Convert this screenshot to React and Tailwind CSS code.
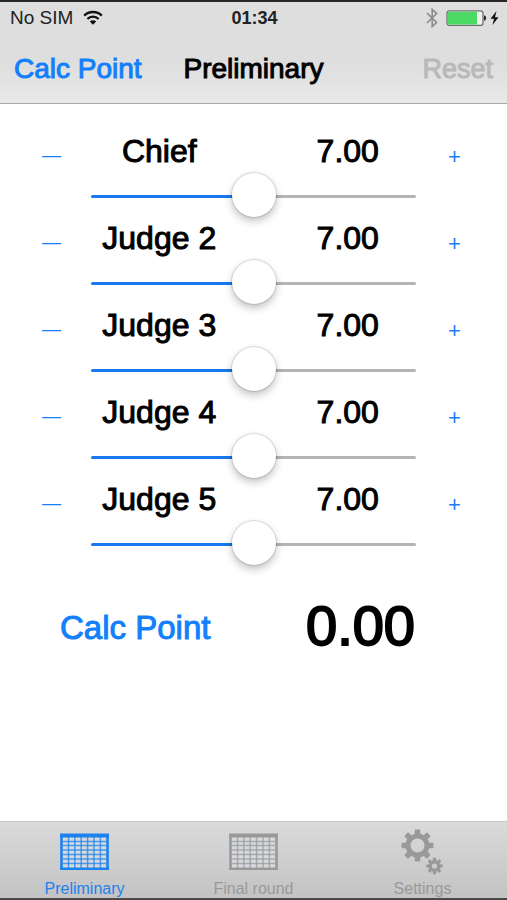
import { useState } from "react";

const MIN = 4;
const MAX = 10;
const MEDIUM = "[-webkit-text-stroke:1px_currentColor]";

function WifiIcon() {
  return (
    <svg width="20" height="16" viewBox="0 0 20 16" fill="none" stroke="#111" aria-hidden="true">
      <path d="M1.2 5.6C6 .8 14 .8 18.8 5.6" strokeWidth="2.4" />
      <path d="M4.4 9C7.4 5.9 12.6 5.9 15.6 9" strokeWidth="2.3" />
      <path d="M10 14.8 6.8 11.4C8.6 9.8 11.4 9.8 13.2 11.4Z" fill="#111" stroke="none" />
    </svg>
  );
}

function BluetoothIcon() {
  return (
    <svg width="12" height="20" viewBox="0 0 12 20" fill="none" stroke="#8c8c8c" strokeWidth="1.6" aria-hidden="true">
      <path d="M1 5 10.6 14.4 6.2 18.6V1.4L10.6 5.6 1 15" />
    </svg>
  );
}

function BatteryIcon() {
  return (
    <svg width="53" height="18" viewBox="0 0 53 18" aria-hidden="true">
      <rect x="1" y="1.8" width="36" height="14.6" rx="2.5" fill="#f0f0f0" stroke="#6f6f6f" strokeWidth="1.3" />
      <path d="M3.5 2.8H31V15.4H3.5Q2 15.4 2 13.9V4.3Q2 2.8 3.5 2.8Z" fill="#4cd964" />
      <path d="M38 6.2Q40.2 7 40.2 9T38 12Z" fill="#222" />
      <path d="M50.5 2 44.5 9.8H48L46.5 16 52.5 8.2H49Z" fill="#111" />
    </svg>
  );
}

function TableIcon() {
  return (
    <svg width="49" height="38" viewBox="0 0 49 38" fill="none" stroke="currentColor" aria-hidden="true">
      <rect x="3" y="4" width="43" height="31" fill="#d6dade" stroke="none" />
      <path d="M8.5 4V35M14.8 4V35M21.2 4V35M27.6 4V35M34 4V35M40.4 4V35" strokeWidth="1.5" opacity=".75" />
      <path d="M3 8.5H46M3 12.5H46M3 17H46M3 21.5H46M3 26H46M3 30.5H46" strokeWidth="1.6" opacity=".75" />
      <path d="M1.5 1V37M47.5 1V37M0 35.8H49" strokeWidth="2.6" />
      <path d="M0 2.5H49" strokeWidth="4" />
    </svg>
  );
}

function Gear({ cx, cy, outer, body, hole, tooth }) {
  const ring = (r) => `M${cx - r} ${cy}a${r} ${r} 0 1 0 ${2 * r} 0a${r} ${r} 0 1 0 ${-2 * r} 0Z`;
  return (
    <g fill="currentColor">
      <path fillRule="evenodd" d={ring(body) + ring(hole)} />
      {[0, 45, 90, 135, 180, 225, 270, 315].map((angle) => (
        <rect
          key={angle}
          x={cx - tooth / 2}
          y={cy - outer}
          width={tooth}
          height={outer - hole - 1}
          rx={tooth / 6}
          transform={`rotate(${angle} ${cx} ${cy})`}
        />
      ))}
    </g>
  );
}

function SettingsIcon() {
  return (
    <svg width="44" height="46" viewBox="0 0 44 46" aria-hidden="true">
      <Gear cx={16.5} cy={16.5} outer={16} body={12} hole={7} tooth={5.6} />
      <Gear cx={33.5} cy={37} outer={8.2} body={6} hole={2.6} tooth={3.2} />
    </svg>
  );
}

function JudgeRow({ name, value, onChange }) {
  const id = name.toLowerCase().replace(" ", "-");
  const fill = ((value - MIN) / (MAX - MIN)) * 100;
  const step = (delta) => onChange(Math.min(MAX, Math.max(MIN, value + delta)));
  const stepClass = "flex items-center justify-center leading-6 text-[#1a7dfa]";
  return (
    <div className="grid grid-cols-[91px_1fr_91px]">
      <button
        type="button"
        aria-label={`Lower ${name}`}
        onClick={() => step(-0.1)}
        className={`${stepClass} h-12 pl-3 text-[19px]`}
      >
        —
      </button>
      <div>
        <div className={`grid grid-cols-2 gap-[52px] text-center text-[32px] leading-10 whitespace-nowrap ${MEDIUM}`}>
          <label htmlFor={id}>{name}</label>
          <output htmlFor={id}>{value.toFixed(2)}</output>
        </div>
        <input
          id={id}
          type="range"
          min={MIN}
          max={MAX}
          step="0.1"
          value={value}
          onChange={(e) => onChange(Number(e.target.value))}
          style={{ "--fill": `${fill}%` }}
          className="mt-1 block h-[43px] w-full appearance-none bg-transparent [&::-webkit-slider-runnable-track]:h-[3px] [&::-webkit-slider-runnable-track]:rounded-full [&::-webkit-slider-runnable-track]:bg-[linear-gradient(to_right,#1878ec_var(--fill),#b4b4b4_var(--fill))] [&::-webkit-slider-thumb]:-mt-[22px] [&::-webkit-slider-thumb]:size-11 [&::-webkit-slider-thumb]:appearance-none [&::-webkit-slider-thumb]:rounded-full [&::-webkit-slider-thumb]:bg-white [&::-webkit-slider-thumb]:shadow-[0_0_1px_1px_rgba(0,0,0,0.12),0_4px_8px_rgba(0,0,0,0.25)]"
        />
      </div>
      <button
        type="button"
        aria-label={`Raise ${name}`}
        onClick={() => step(0.1)}
        className={`${stepClass} h-[52px] pr-[14px] text-[22px]`}
      >
        +
      </button>
    </div>
  );
}

function Tab({ label, active, onClick, children }) {
  return (
    <button
      type="button"
      aria-current={active ? "page" : undefined}
      onClick={onClick}
      className={`flex flex-1 flex-col items-center ${active ? "text-[#1c82ee]" : "text-[#999]"}`}
    >
      <span className="flex h-[46px] items-center">{children}</span>
      <span className="mt-[5px] text-base leading-[18px]">{label}</span>
    </button>
  );
}

export default function App() {
  const [scores, setScores] = useState([
    { name: "Chief", value: 7 },
    { name: "Judge 2", value: 7 },
    { name: "Judge 3", value: 7 },
    { name: "Judge 4", value: 7 },
    { name: "Judge 5", value: 7 },
  ]);
  const [total, setTotal] = useState(0);
  const [tab, setTab] = useState("Preliminary");

  const setScore = (index, value) => setScores(scores.map((s, i) => (i === index ? { ...s, value } : s)));
  const calculate = () => setTotal(scores.reduce((sum, s) => sum + s.value, 0) / scores.length);
  const reset = () => setScores(scores.map((s) => ({ ...s, value: 7 })));

  return (
    <div className="flex min-h-screen flex-col border-t-2 border-b-2 border-t-[#2b2627] border-b-[#4c484a] bg-white font-['Liberation_Sans',Arial,sans-serif] text-black">
      <header className="border-b border-[#a9a9a9] bg-linear-to-b from-[#dedede] from-60% to-[#e9e9e9]">
        <div className="grid h-8 grid-cols-3 items-center pr-2 pl-[10px] text-[19px] leading-6 text-[#222]">
          <div className="flex items-center gap-[10px]">
            <span>No SIM</span>
            <WifiIcon />
          </div>
          <time className="text-center text-[18px] font-bold">01:34</time>
          <div className="flex items-center justify-end gap-2">
            <BluetoothIcon />
            <BatteryIcon />
          </div>
        </div>
        <div className="grid h-[69px] grid-cols-[1fr_auto_1fr] items-center px-[14px] text-[28px] leading-9 whitespace-nowrap">
          <button type="button" onClick={calculate} className={`justify-self-start text-[#137ffb] ${MEDIUM}`}>
            Calc Point
          </button>
          <h1 className={MEDIUM}>Preliminary</h1>
          <button type="button" onClick={reset} className={`justify-self-end text-[27px] text-[#b9b9b9] ${MEDIUM}`}>
            Reset
          </button>
        </div>
      </header>

      <main className="flex-1 pt-[27px]">
        {scores.map((s, i) => (
          <JudgeRow key={s.name} name={s.name} value={s.value} onChange={(v) => setScore(i, v)} />
        ))}
        <div className="mt-5 flex h-20 items-center px-[60px] whitespace-nowrap">
          <button type="button" onClick={calculate} className={`pt-1 text-[33px] leading-10 text-[#137ffb] ${MEDIUM}`}>
            Calc Point
          </button>
          <output className="ml-auto pr-8 text-[56px] leading-[64px] [-webkit-text-stroke:2px_currentColor]">
            {total.toFixed(2)}
          </output>
        </div>
      </main>

      <nav className="flex h-[77px] border-t border-[#c4c4c4] bg-linear-to-b from-[#dadada] to-[#c3c3c3] pt-[7px]">
        <Tab label="Preliminary" active={tab === "Preliminary"} onClick={() => setTab("Preliminary")}>
          <TableIcon />
        </Tab>
        <Tab label="Final round" active={tab === "Final round"} onClick={() => setTab("Final round")}>
          <TableIcon />
        </Tab>
        <Tab label="Settings" active={tab === "Settings"} onClick={() => setTab("Settings")}>
          <SettingsIcon />
        </Tab>
      </nav>
    </div>
  );
}
